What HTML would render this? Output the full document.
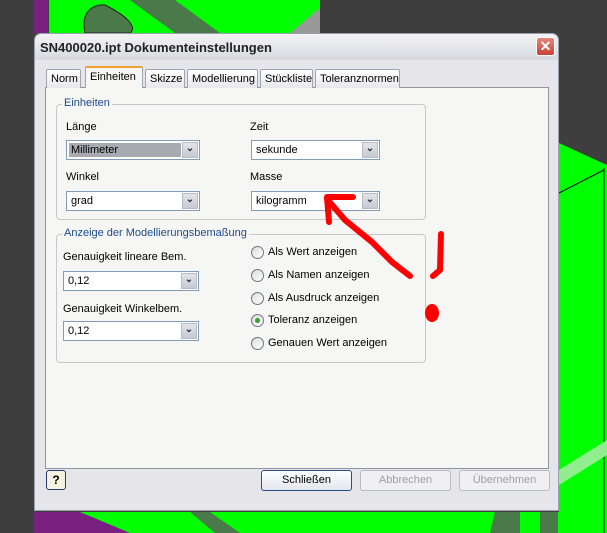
<!DOCTYPE html>
<html><head><meta charset="utf-8"><style>
*{box-sizing:border-box;margin:0;padding:0}
body{width:607px;height:533px;overflow:hidden;background:#3e3e3e;font-family:"Liberation Sans",sans-serif;font-size:11px;color:#000;position:relative}
.a{position:absolute;white-space:nowrap}
.dlg{left:34px;top:33px;width:525px;height:478px;background:#e6e6ea;border:1px solid #9aa0b0;border-radius:7px 7px 0 0}
.title{left:0;top:0;width:523px;height:26px;background:linear-gradient(#f4f4f6,#d8d9e0);border-radius:7px 7px 0 0;font:bold 13px "Liberation Sans",sans-serif;color:#222;padding:6px 0 0 5px}
.close{left:501px;top:3px;width:19px;height:19px;border-radius:3px;background:linear-gradient(#e6867a,#c8423a);border:1px solid #fff;color:#fff;font:bold 14px sans-serif;text-align:center;line-height:17px}
.tab{top:35px;height:19px;background:linear-gradient(#fff,#e8e8ec);border:1px solid #a0a4b0;border-bottom:none;border-radius:2px 2px 0 0;padding:3px 0 0 4px;font-size:11px}
.panel{left:10px;top:53px;width:504px;height:382px;background:#f6f6f4;border:1px solid #90949c}
.grp{border:1px solid #c8c8cc;border-radius:4px}
.lg{background:#f6f6f4;color:#1c4a8c;padding:0 2px}
.cb{height:20px;background:#fff;border:1px solid #7f9db9}
.cb span{position:absolute;left:4px;top:3px}
.cb i{position:absolute;right:1px;top:1px;width:16px;height:16px;background:linear-gradient(#e2e4ea,#c6cad4);border:1px solid #b8bcc8;font-style:normal;font-size:10px;font-weight:bold;text-align:center;line-height:12px;color:#333}
.rd{width:13px;height:13px;border:1px solid #6c7488;border-radius:50%;background:linear-gradient(135deg,#dcdcd8,#fff)}
.btn{top:436px;width:91px;height:21px;border:1px solid #b8bcc4;border-radius:3px;background:#f0f0f2;color:#a0a0a0;text-align:center;line-height:19px}
</style></head><body>
<svg class="a" style="left:0;top:0" width="607" height="533">
<polygon points="34,0 48,0 48,33 34,33" fill="#7a2080"/>
<polygon points="49,0 320,0 320,33 49,33" fill="#00ff00"/>
<path d="M85,33 C80,10 95,4 105,5 C135,20 135,30 130,33Z" fill="#4a7a4a" stroke="#222"/>
<polygon points="130,0 175,0 220,33 175,33" fill="#4a7a4a"/>
<polygon points="290,33 320,8 320,33" fill="#999"/>
<polygon points="559,143 607,165 607,533 559,533" fill="#00ff00"/>
<line x1="559" y1="193" x2="604" y2="170" stroke="#111"/>
<line x1="604" y1="168" x2="604" y2="533" stroke="#111"/>
<polygon points="559,470 607,440 607,455 559,485" fill="#90ee90"/>
<polygon points="34,512 560,512 560,533 34,533" fill="#00ff00"/>
<polygon points="34,512 80,512 130,533 34,533" fill="#7a2080"/>
<polygon points="190,512 210,512 240,533 215,533" fill="#4a7a4a"/>
<polygon points="495,512 520,512 520,533 490,533" fill="#4a7a4a"/>
<polygon points="540,512 558,512 558,533 540,533" fill="#4a7a4a"/>
<polygon points="0,0 34,0 34,533 0,533" fill="#3e3e3e"/>
</svg>
<div class="a dlg">
<div class="a title">SN400020.ipt Dokumenteinstellungen</div>
<div class="a close">✕</div>
<div class="a panel"></div>
<div class="a tab" style="left:11px;width:35px">Norm</div>
<div class="a tab" style="left:110px;width:40px">Skizze</div>
<div class="a tab" style="left:152px;width:71px">Modellierung</div>
<div class="a tab" style="left:225px;width:53px">Stückliste</div>
<div class="a tab" style="left:280px;width:85px">Toleranznormen</div>
<div class="a tab" style="left:50px;top:32px;width:58px;height:22px;background:#f6f6f4;border-top:2px solid #f0a030;border-bottom:none">Einheiten</div>
<div class="a grp" style="left:21px;top:70px;width:370px;height:116px"></div>
<div class="a lg" style="left:27px;top:63px">Einheiten</div>
<div class="a" style="left:31px;top:87px">Länge</div>
<div class="a" style="left:215px;top:87px">Zeit</div>
<div class="a cb" style="left:31px;top:106px;width:134px"><span style="left:2px;top:2px;width:112px;height:14px;background:#a8aab0;padding:1px 2px">Millimeter</span><i>⌄</i></div>
<div class="a cb" style="left:216px;top:106px;width:129px"><span>sekunde</span><i>⌄</i></div>
<div class="a" style="left:31px;top:137px">Winkel</div>
<div class="a" style="left:215px;top:137px">Masse</div>
<div class="a cb" style="left:31px;top:157px;width:134px"><span>grad</span><i>⌄</i></div>
<div class="a cb" style="left:216px;top:157px;width:129px"><span>kilogramm</span><i>⌄</i></div>
<div class="a grp" style="left:21px;top:200px;width:370px;height:129px"></div>
<div class="a lg" style="left:27px;top:193px">Anzeige der Modellierungsbemaßung</div>
<div class="a" style="left:28px;top:217px">Genauigkeit lineare Bem.</div>
<div class="a cb" style="left:28px;top:237px;width:136px"><span>0,12</span><i>⌄</i></div>
<div class="a" style="left:28px;top:269px">Genauigkeit Winkelbem.</div>
<div class="a cb" style="left:28px;top:287px;width:136px"><span>0,12</span><i>⌄</i></div>
<div class="a rd" style="left:216px;top:212px"></div><div class="a" style="left:233px;top:212px">Als Wert anzeigen</div>
<div class="a rd" style="left:216px;top:235px"></div><div class="a" style="left:233px;top:235px">Als Namen anzeigen</div>
<div class="a rd" style="left:216px;top:258px"></div><div class="a" style="left:233px;top:258px">Als Ausdruck anzeigen</div>
<div class="a rd" style="left:216px;top:280px"><div class="a" style="left:3px;top:3px;width:5px;height:5px;border-radius:50%;background:#3aa03a"></div></div><div class="a" style="left:233px;top:280px">Toleranz anzeigen</div>
<div class="a rd" style="left:216px;top:303px"></div><div class="a" style="left:233px;top:303px">Genauen Wert anzeigen</div>
<div class="a" style="left:11px;top:436px;width:20px;height:20px;border:1px solid #2a3a6a;border-radius:3px;background:#f4f2e0;font:bold 12px sans-serif;text-align:center;line-height:18px">?</div>
<div class="a btn" style="left:226px;border:1px solid #2a4a8a;color:#000;background:linear-gradient(#fff,#e4e6ee)">Schließen</div>
<div class="a btn" style="left:325px">Abbrechen</div>
<div class="a btn" style="left:424px">Übernehmen</div>
</div>
<svg class="a" style="left:0;top:0" width="607" height="533">
<g fill="none" stroke="#f00" stroke-width="6" stroke-linecap="round" stroke-linejoin="round">
<path d="M353,197 L327,197 L329,222"/>
<path d="M327,199 L345,220 L372,242 L392,262 L410,276"/>
<path d="M441,234 L440,270 L433,276"/>
</g>
<ellipse cx="432" cy="313" rx="7" ry="9" fill="#f00"/>
</svg>
</body></html>
